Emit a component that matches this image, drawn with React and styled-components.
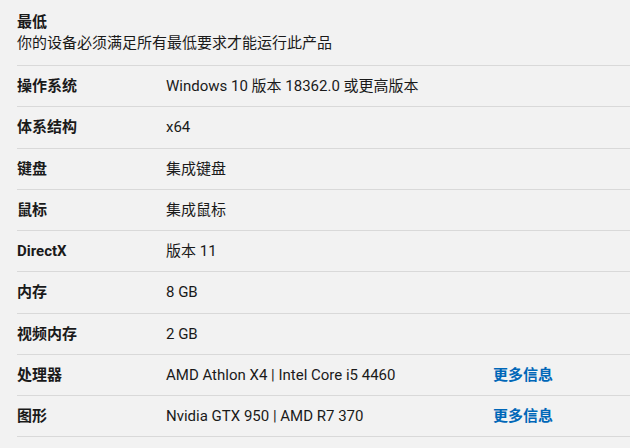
import React from "react";
import styled, { createGlobalStyle } from "styled-components";

const Global = createGlobalStyle`
  html, body { margin: 0; padding: 0; background: #f2f2f2; }
  body { font-family: Roboto, "Noto Sans CJK SC", sans-serif; color: #1a1a1a; }
`;

const Page = styled.div`
  width: 630px;
  height: 448px;
  overflow: hidden;
  background: #f2f2f2;
  padding-left: 17px;
  box-sizing: border-box;
  font-size: 15px;
`;

const Header = styled.div`
  padding: 12px 0 11px;
  line-height: 21px;
`;

const Title = styled.div`
  font-weight: 700;
`;

const Subtitle = styled.div``;

const List = styled.div`
  border-bottom: 1px solid #d9d9d9;
`;

const Row = styled.div`
  display: grid;
  grid-template-columns: 149px 327px 1fr;
  align-items: center;
  height: 40.25px;
  border-top: 1px solid #d9d9d9;
  line-height: 20px;
`;

const Label = styled.div`
  font-weight: 700;
`;

const Value = styled.div``;

const Link = styled.a`
  color: #0067b8;
  font-weight: 700;
  text-decoration: none;
`;

const rows = [
  ["操作系统", "Windows 10 版本 18362.0 或更高版本"],
  ["体系结构", "x64"],
  ["键盘", "集成键盘"],
  ["鼠标", "集成鼠标"],
  ["DirectX", "版本 11"],
  ["内存", "8 GB"],
  ["视频内存", "2 GB"],
  ["处理器", "AMD Athlon X4 | Intel Core i5 4460", true],
  ["图形", "Nvidia GTX 950 | AMD R7 370", true],
];

export default function App() {
  return (
    <>
      <Global />
      <Page>
        <Header>
          <Title>最低</Title>
          <Subtitle>你的设备必须满足所有最低要求才能运行此产品</Subtitle>
        </Header>
        <List>
          {rows.map(([l, v, more]) => (
            <Row key={l}>
              <Label>{l}</Label>
              <Value>{v}</Value>
              <div>{more && <Link href="#">更多信息</Link>}</div>
            </Row>
          ))}
        </List>
      </Page>
    </>
  );
}
